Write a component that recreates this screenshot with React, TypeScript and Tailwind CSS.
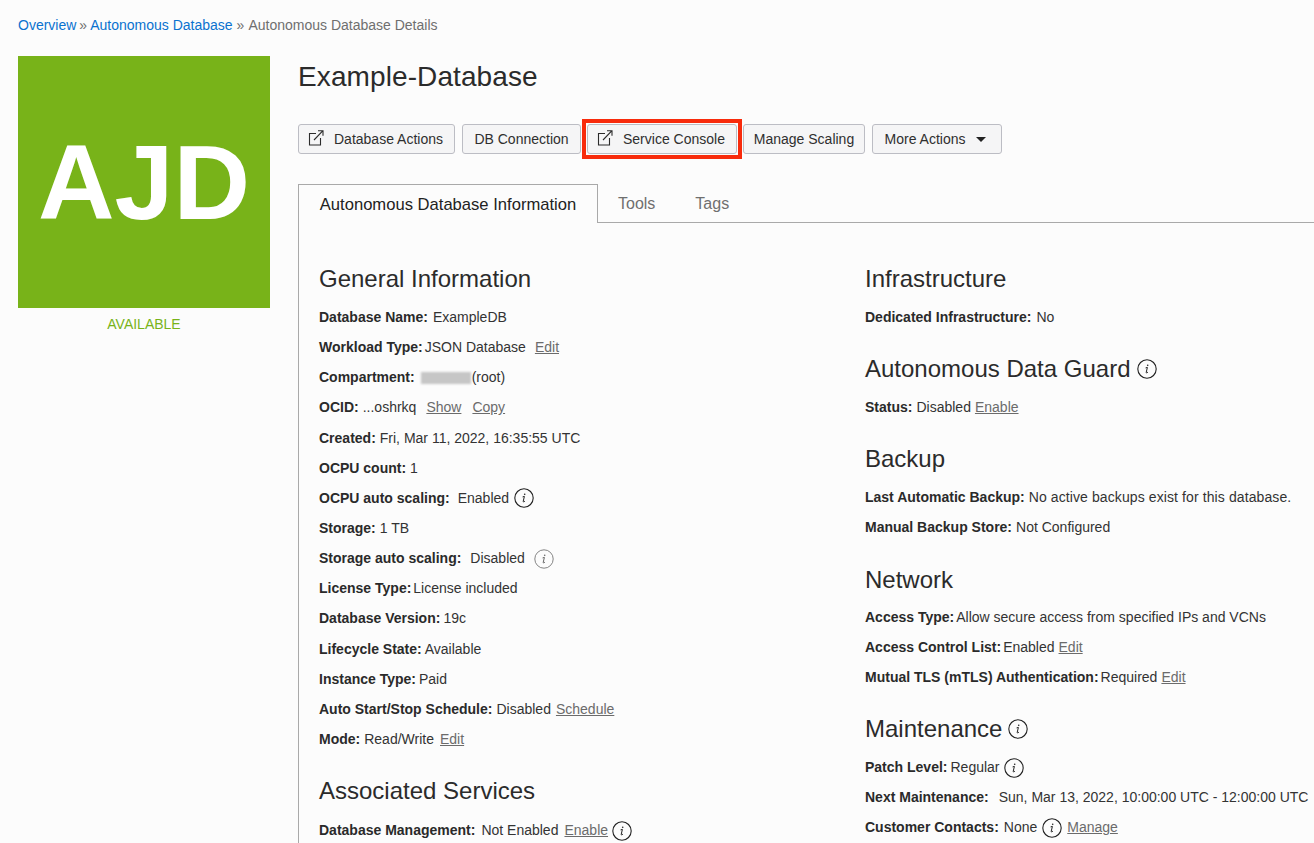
const font = "font-['Liberation_Sans',Arial,sans-serif]";

function ExternalIcon() {
  return (
    <svg width="18" height="18" viewBox="0 0 18 18" fill="none" stroke="#2b2b2b" strokeWidth="1.1" className="shrink-0">
      <path d="M8 3.5H1.5V15H12.5V8" />
      <path d="M6 10L14.5 1.2M10 .8H15V5.8" />
    </svg>
  );
}

function Info({ gray, className = "" }: { gray?: boolean; className?: string }) {
  const c = gray ? "#666" : "#222";
  return (
    <svg width="20" height="20" viewBox="0 0 20 20" fill="none" className={`inline-block shrink-0 ${className}`}>
      <circle cx="10" cy="10" r="9.2" stroke={c} strokeWidth={gray ? 0.8 : 1.1} />
      <path d="M8.6 8.9L10.4 8.4L9.2 13.4C9.1 14 9.6 14.2 10.9 13.2" stroke={c} strokeWidth="1" />
      <circle cx="10.7" cy="6.2" r="0.8" fill={c} />
    </svg>
  );
}

function Btn({ children, icon, caret, w }: { children: string; icon?: boolean; caret?: boolean; w: string }) {
  return (
    <div className={`flex h-[30px] items-center gap-[8px] rounded-[3px] border border-[#bcbdc4] bg-[#f5f5f6] text-[14px] text-[#2f2f2f] ${icon ? "justify-start pl-[9px]" : "justify-center"} ${caret ? "pr-[3px]" : ""} ${w}`}>
      {icon && <ExternalIcon />}
      <span>{children}</span>
      {caret && <span className="ml-[3px] h-0 w-0 border-x-[5px] border-t-[5px] border-x-transparent border-t-[#222]" />}
    </div>
  );
}

function L({ children }: { children: string }) {
  return <a className="text-[#6b6b6b] underline">{children}</a>;
}

// gap = space after the bold label, it differs a bit per row in the reference
function Row({ label, gap = "mr-[4px]", children }: { label: string; gap?: string; children?: React.ReactNode }) {
  return (
    <div className="flex h-[30.15px] items-center whitespace-nowrap text-[14px] text-[#333]">
      <b className={`font-bold text-[#2a2a2a] ${gap}`}>{label}</b>
      {children}
    </div>
  );
}

function H({ children, info, className = "" }: { children: string; info?: boolean; className?: string }) {
  return (
    <h2 className={`flex items-center gap-[6px] text-[24px] leading-[30px] text-[#2b2b2b] ${className}`}>
      {children}
      {info && <Info />}
    </h2>
  );
}

export default function App() {
  return (
    <div className={`h-[843px] overflow-hidden bg-[#fcfcfc] ${font}`}>
      <div className="flex h-[50px] items-center pl-[18px] text-[14px] text-[#6f6f6f]">
        <a className="text-[#0a72cf]">Overview</a>
        <span className="mx-[3px]">»</span>
        <a className="text-[#0a72cf]">Autonomous Database</a>
        <span className="mx-[4px]">»</span>
        <span>Autonomous Database Details</span>
      </div>

      <div className="flex pl-[18px] pt-[6px]">
        <div className="w-[252px] shrink-0">
          <div className="flex h-[252px] items-center justify-center bg-[#78b319] text-[106px] font-bold text-white">
            AJD
          </div>
          <div className="mt-[6px] text-center text-[14px] text-[#78b319]">AVAILABLE</div>
        </div>

        <div className="ml-[28px] min-w-0 flex-1">
          <h1 className="h-[42px] text-[28px] leading-[42px] tracking-[0.1px] text-[#2b2b2b]">Example-Database</h1>

          <div className="mt-[26px] flex h-[30px] items-center">
            <Btn icon w="w-[157px]">Database Actions</Btn>
            <div className="ml-[7px]"><Btn w="w-[119px]">DB Connection</Btn></div>
            <div className="ml-px border-4 border-[#f82b0c] p-px">
              <Btn icon w="w-[150px]">Service Console</Btn>
            </div>
            <div className="ml-px"><Btn w="w-[122px]">Manage Scaling</Btn></div>
            <div className="ml-[7px]"><Btn caret w="w-[130px]">More Actions</Btn></div>
          </div>

          <div className="mt-[30px] flex h-[39px] items-stretch border-b border-[#a9a9a9] text-[16px]">
            <div className="-mb-px flex w-[300px] items-center justify-center border border-b-0 border-[#a9a9a9] bg-[#fcfcfc] pt-[2px] text-[16.6px] text-[#222]">
              Autonomous Database Information
            </div>
            <div className="ml-[20px] flex items-center pt-[2px] text-[#6f6f6f]">Tools</div>
            <div className="ml-[40px] flex items-center pt-[2px] text-[#6f6f6f]">Tags</div>
          </div>

          <div className="flex h-[700px] border-l border-[#a9a9a9] pl-[20px]">
            <div className="w-[546px] shrink-0">
              <H className="mt-[41px] mb-[8.5px]">General Information</H>
              <Row label="Database Name:" gap="mr-[5px]">ExampleDB</Row>
              <Row label="Workload Type:" gap="mr-[2px]">JSON Database<span className="ml-[9px]"><L>Edit</L></span></Row>
              <Row label="Compartment:">
                <span className="ml-[2px] mr-px h-[12px] w-[50px] bg-[#c6c6c6] blur-[1px]" />(root)
              </Row>
              <Row label="OCID:">...oshrkq<span className="ml-[10px]"><L>Show</L></span><span className="ml-[11px]"><L>Copy</L></span></Row>
              <Row label="Created:">Fri, Mar 11, 2022, 16:35:55 UTC</Row>
              <Row label="OCPU count:">1</Row>
              <Row label="OCPU auto scaling:"><span className="ml-[4px]">Enabled</span><Info className="ml-[5px]" /></Row>
              <Row label="Storage:">1 TB</Row>
              <Row label="Storage auto scaling:"><span className="ml-[5px]">Disabled</span><Info gray className="ml-[9px]" /></Row>
              <Row label="License Type:" gap="mr-[2px]">License included</Row>
              <Row label="Database Version:" gap="mr-[3px]">19c</Row>
              <Row label="Lifecycle State:" gap="mr-[3px]">Available</Row>
              <Row label="Instance Type:" gap="mr-[3px]">Paid</Row>
              <Row label="Auto Start/Stop Schedule:">Disabled<span className="ml-[5px]"><L>Schedule</L></span></Row>
              <Row label="Mode:">Read/Write<span className="ml-[6px]"><L>Edit</L></span></Row>
              <H className="mt-[21px] mb-[10px]">Associated Services</H>
              <Row label="Database Management:" gap="mr-[6px]">Not Enabled<span className="ml-[6px]"><L>Enable</L></span><Info className="ml-[4px]" /></Row>
            </div>

            <div className="min-w-0 flex-1">
              <H className="mt-[41px] mb-[8px]">Infrastructure</H>
              <Row label="Dedicated Infrastructure:" gap="mr-[5px]">No</Row>
              <H info className="mt-[22px] mb-[8px]">Autonomous Data Guard</H>
              <Row label="Status:">Disabled<span className="ml-[4px]"><L>Enable</L></span></Row>
              <H className="mt-[22px] mb-[8px]">Backup</H>
              <Row label="Last Automatic Backup:"><span className="tracking-[0.1px]">No active backups exist for this database.</span></Row>
              <Row label="Manual Backup Store:">Not Configured</Row>
              <H className="mt-[22px] mb-[8px]">Network</H>
              <Row label="Access Type:" gap="mr-[2px]">Allow secure access from specified IPs and VCNs</Row>
              <Row label="Access Control List:" gap="mr-[2px]">Enabled<span className="ml-[4px]"><L>Edit</L></span></Row>
              <Row label="Mutual TLS (mTLS) Authentication:" gap="mr-[2px]">Required<span className="ml-[4px]"><L>Edit</L></span></Row>
              <H info className="mt-[21.5px] mb-[8px]">Maintenance</H>
              <Row label="Patch Level:" gap="mr-[3px]">Regular<Info className="ml-[4px]" /></Row>
              <Row label="Next Maintenance:"><span className="ml-[6px]">Sun, Mar 13, 2022, 10:00:00 UTC - 12:00:00 UTC</span></Row>
              <Row label="Customer Contacts:" gap="mr-[5px]">None<Info className="ml-[5px]" /><span className="ml-[5px]"><L>Manage</L></span></Row>
            </div>
          </div>
        </div>
      </div>
    </div>
  );
}
